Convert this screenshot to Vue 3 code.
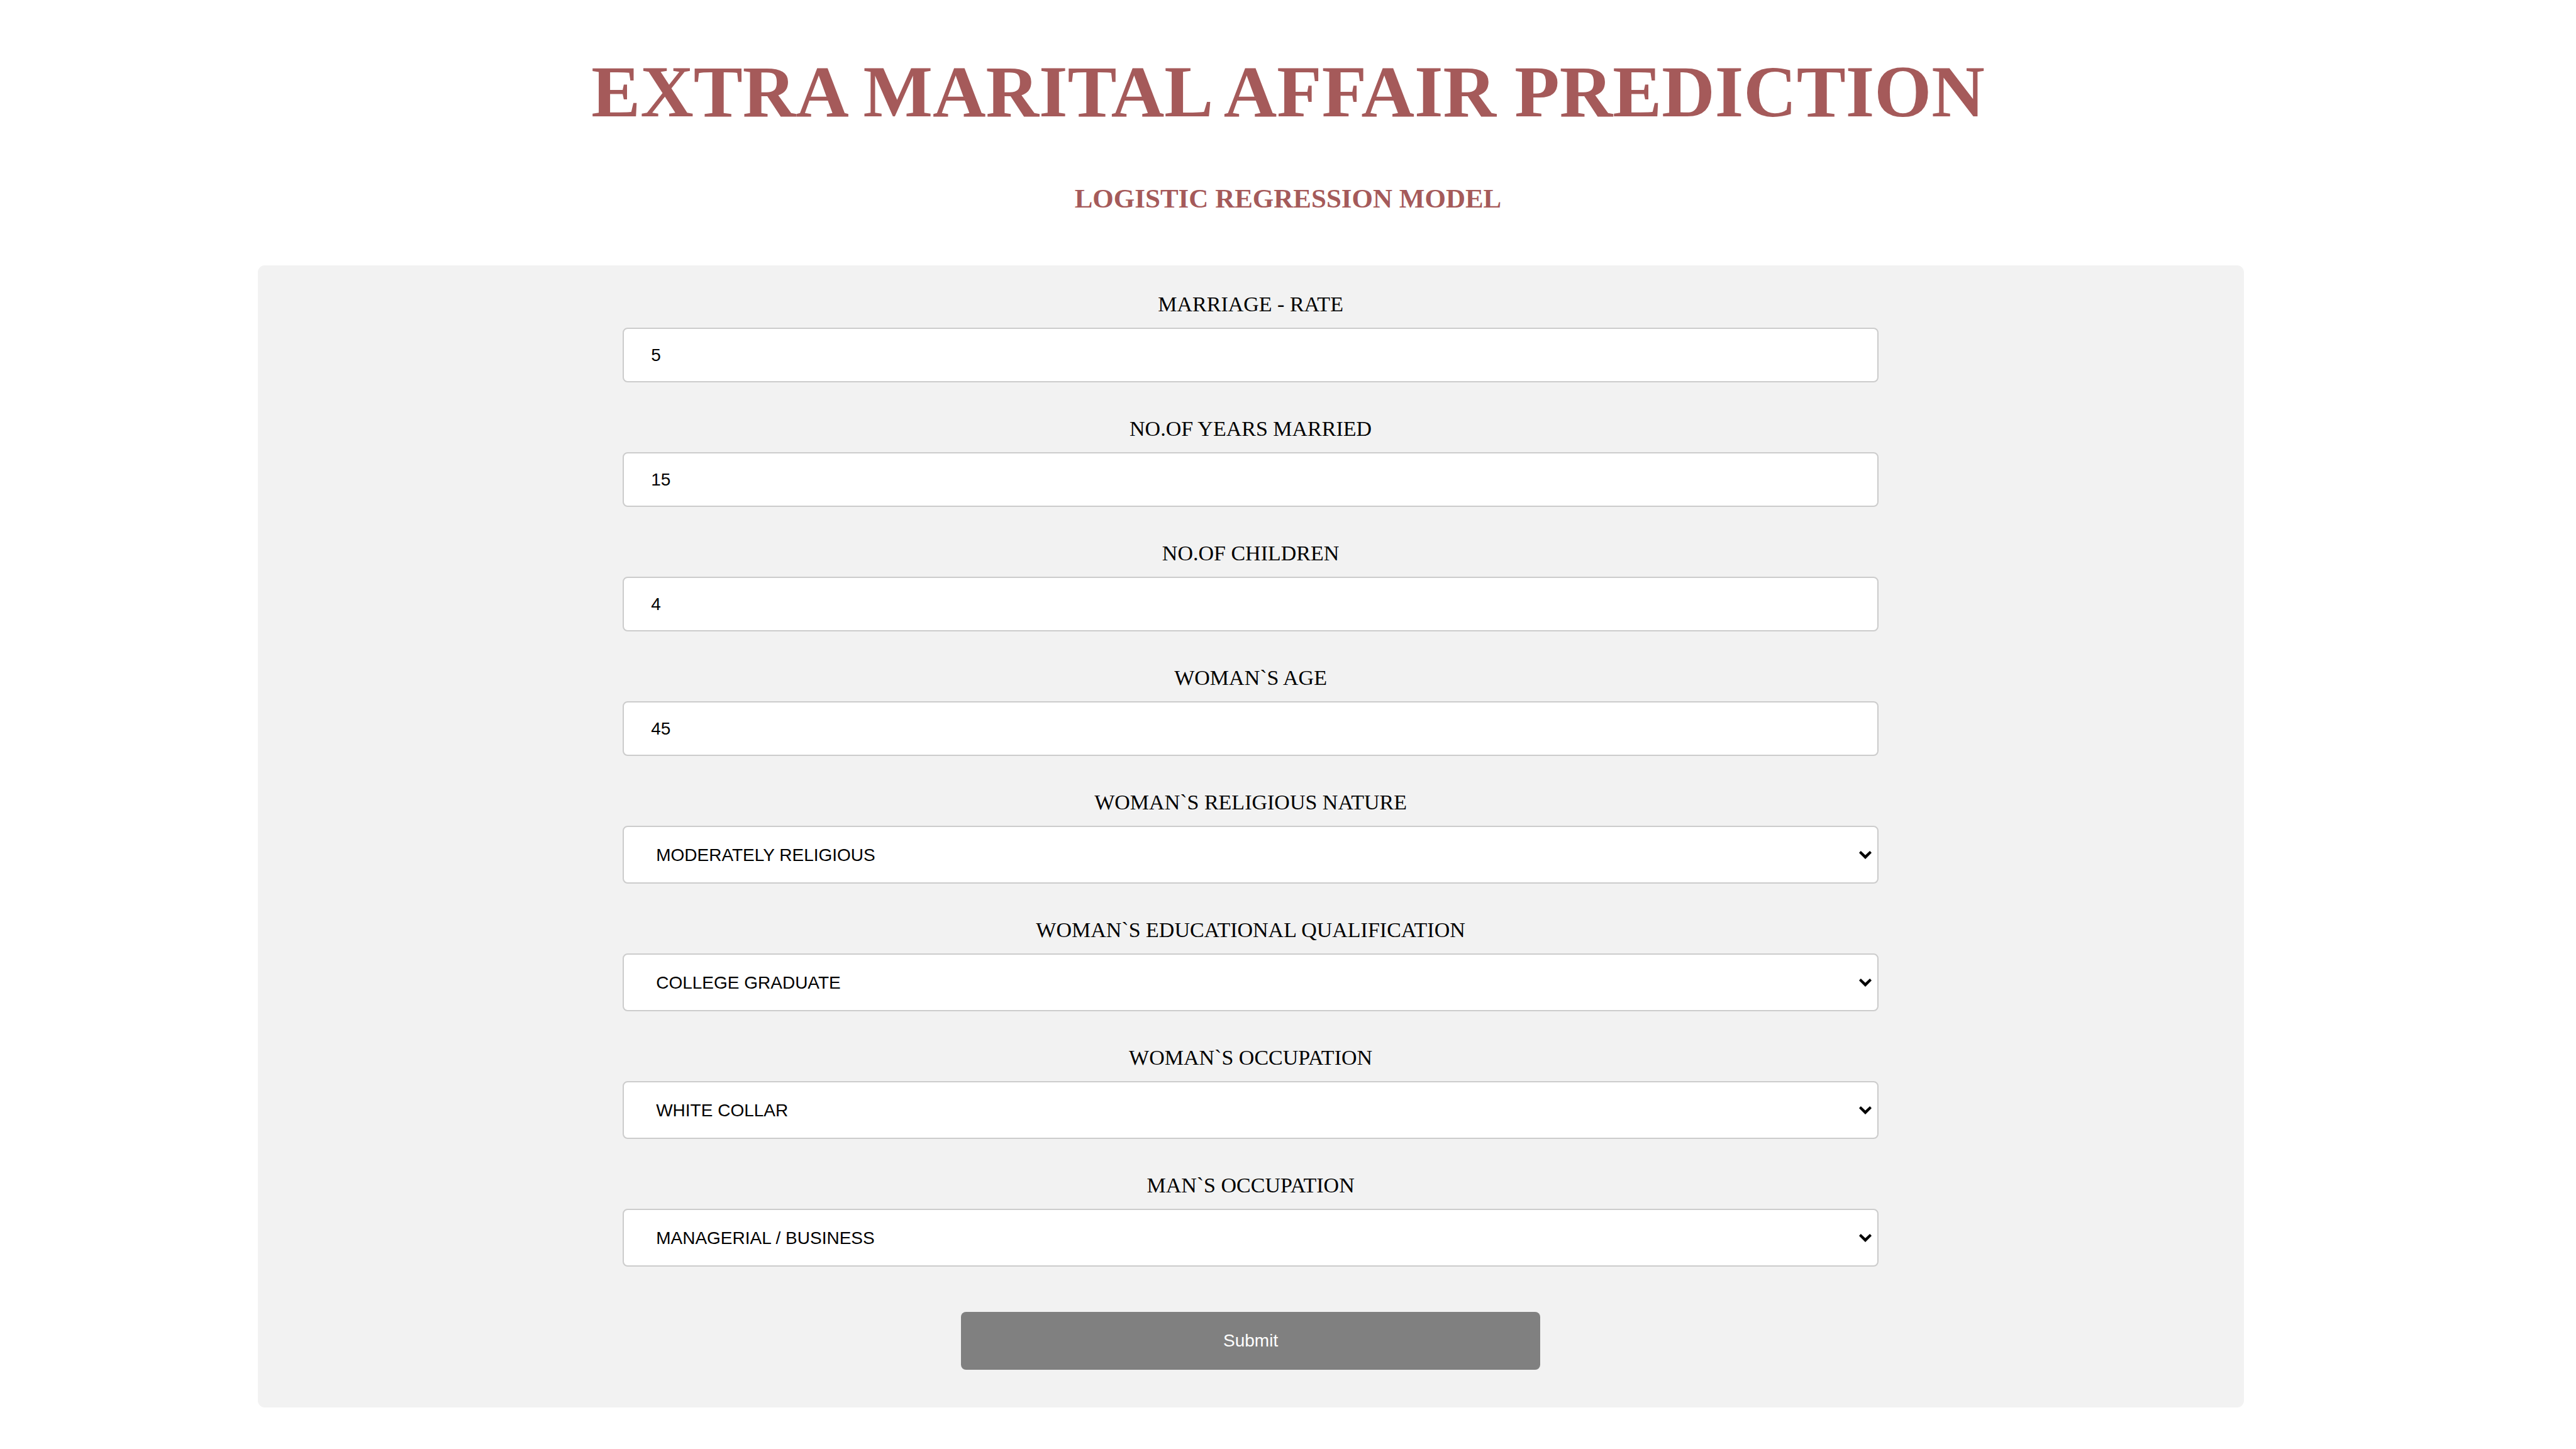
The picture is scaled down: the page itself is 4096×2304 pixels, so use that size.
<script setup>
import { reactive } from 'vue'

const numberFields = [
  { id: 'marriage-rate', label: 'MARRIAGE - RATE' },
  { id: 'years-married', label: 'NO.OF YEARS MARRIED' },
  { id: 'children', label: 'NO.OF CHILDREN' },
  { id: 'age', label: 'WOMAN`S AGE' },
]

const choiceFields = [
  { id: 'religious', label: 'WOMAN`S RELIGIOUS NATURE', options: ['MODERATELY RELIGIOUS'] },
  { id: 'education', label: 'WOMAN`S EDUCATIONAL QUALIFICATION', options: ['COLLEGE GRADUATE'] },
  { id: 'occupation', label: 'WOMAN`S OCCUPATION', options: ['WHITE COLLAR'] },
  { id: 'man-occupation', label: 'MAN`S OCCUPATION', options: ['MANAGERIAL / BUSINESS'] },
]

const form = reactive({
  'marriage-rate': '5',
  'years-married': '15',
  children: '4',
  age: '45',
  religious: 'MODERATELY RELIGIOUS',
  education: 'COLLEGE GRADUATE',
  occupation: 'WHITE COLLAR',
  'man-occupation': 'MANAGERIAL / BUSINESS',
})
</script>

<template>
  <main class="page">
    <h1>EXTRA MARITAL AFFAIR PREDICTION</h1>
    <h3>LOGISTIC REGRESSION MODEL</h3>

    <form class="panel" @submit.prevent>
      <div v-for="field in numberFields" :key="field.id" class="field">
        <label :for="field.id">{{ field.label }}</label>
        <input :id="field.id" v-model="form[field.id]" class="control text" type="text" />
      </div>

      <div v-for="field in choiceFields" :key="field.id" class="field">
        <label :for="field.id">{{ field.label }}</label>
        <div class="select-box">
          <select :id="field.id" v-model="form[field.id]" class="control choice">
            <option v-for="option in field.options" :key="option" :value="option">{{ option }}</option>
          </select>
          <svg class="chevron" viewBox="0 0 112 72" aria-hidden="true">
            <path d="M0 16L16 0L56 38L96 0L112 16L56 72Z" />
          </svg>
        </div>
      </div>

      <button class="submit" type="submit">Submit</button>
    </form>
  </main>
</template>

<style>
body {
  margin: 0;
  background: #fff;
}
</style>

<style scoped>
.page {
  display: flow-root;
  font-family: "Liberation Serif", "Times New Roman", serif;
  color: #000;
}

h1,
h3 {
  margin: 0;
  text-align: center;
  font-weight: bold;
  color: #a55a5a;
}

h1 {
  padding-top: 77px;
  font-size: 117px;
  line-height: 138px;
}

h3 {
  padding: 77px 0 82px;
  font-size: 43px;
  line-height: 48px;
}

.panel {
  display: flex;
  flex-direction: column;
  align-items: center;
  gap: 55px;
  width: 75%;
  margin-left: 10%;
  padding: 43px 43px 60px;
  border-radius: 11px;
  background: #f2f2f2;
}

.field {
  display: flex;
  flex-direction: column;
  align-items: center;
  gap: 18px;
  width: 65%;
}

label {
  font-size: 34px;
  line-height: 38px;
}

.control {
  display: block;
  box-sizing: border-box;
  width: 100%;
  margin: 0;
  border: 2px solid #ccc;
  border-radius: 8px;
  background: #fff;
  color: #000;
  font-family: "Liberation Sans", Arial, sans-serif;
  font-size: 28px;
}

.text {
  height: 87px;
  padding: 0 43px;
}

.select-box {
  position: relative;
  width: 100%;
}

.choice {
  height: 92px;
  padding: 0 51px;
  appearance: none;
}

.chevron {
  position: absolute;
  top: 40px;
  right: 11px;
  width: 20px;
  height: 13px;
  pointer-events: none;
}

.submit {
  width: 30%;
  height: 92px;
  margin: 17px 0 0;
  padding: 0;
  border: 0;
  border-radius: 8px;
  background: #808080;
  color: #fff;
  font-family: "Liberation Sans", Arial, sans-serif;
  font-size: 28px;
  cursor: pointer;
}
</style>
